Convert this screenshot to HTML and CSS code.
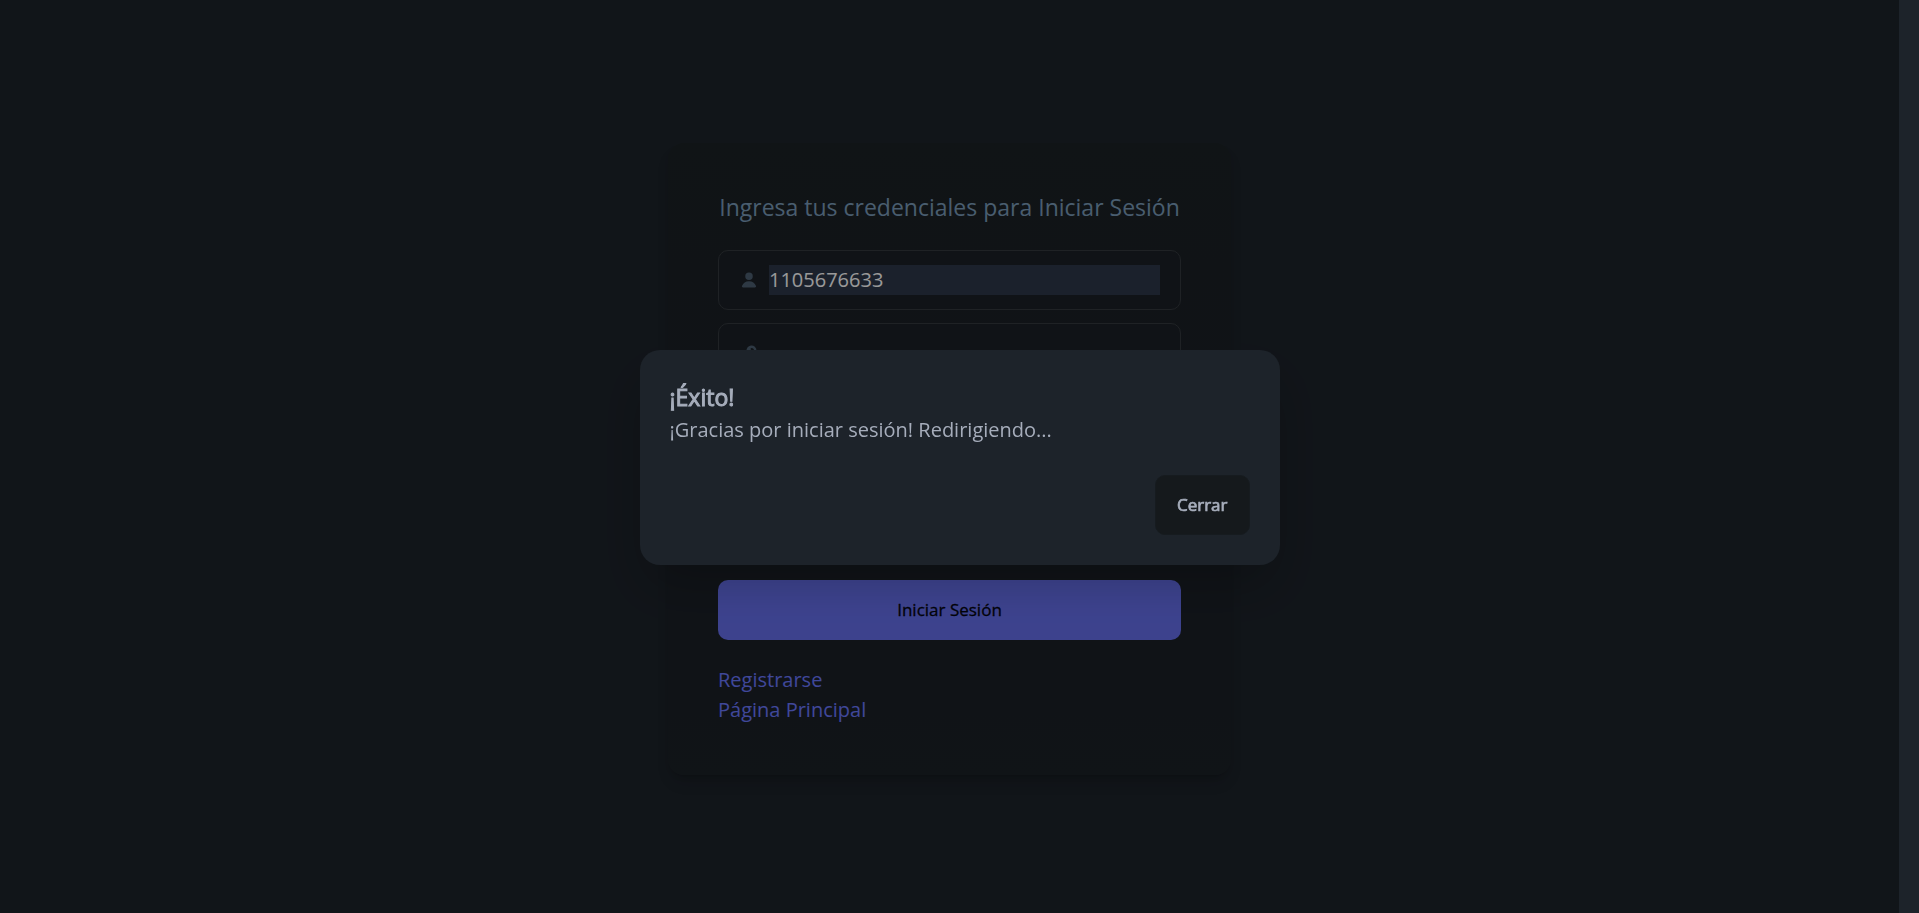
FILE: index.html
```html
<!DOCTYPE html>
<html lang="es">
<head>
<meta charset="utf-8">
<meta name="viewport" content="width=device-width, initial-scale=1">
<title>Iniciar Sesión</title>
<link rel="stylesheet" href="styles.css">
</head>
<body>
<main class="page">
  <form class="card">
    <h1 class="card-title">Ingresa tus credenciales para Iniciar Sesión</h1>
    <div class="fields">
      <label class="field">
        <svg class="field-icon" viewBox="0 0 16 16" fill="currentColor" aria-hidden="true"><path d="M8 8a3 3 0 1 0 0-6 3 3 0 0 0 0 6ZM12.735 14c.618 0 1.093-.561.872-1.139a6.002 6.002 0 0 0-11.215 0c-.22.578.254 1.139.872 1.139h9.47Z"/></svg>
        <input class="field-input filled" type="text" aria-label="Usuario" value="1105676633">
      </label>
      <label class="field">
        <svg class="field-icon" viewBox="0 0 16 16" fill="currentColor" aria-hidden="true"><path fill-rule="evenodd" d="M14 6a4 4 0 0 1-4.899 3.899l-1.955 1.955a.5.5 0 0 1-.353.146H5v1.5a.5.5 0 0 1-.5.5h-2a.5.5 0 0 1-.5-.5v-2.293a.5.5 0 0 1 .146-.353l3.955-3.955A4 4 0 1 1 14 6Zm-4-2a.75.75 0 0 0 0 1.5.5.5 0 0 1 .5.5.75.75 0 0 0 1.5 0 2 2 0 0 0-2-2Z" clip-rule="evenodd"/></svg>
        <input class="field-input" type="password" aria-label="Contraseña">
      </label>
    </div>
    <button class="submit" type="button">Iniciar Sesión</button>
    <nav class="links">
      <a href="#">Registrarse</a>
      <a href="#">Página Principal</a>
    </nav>
  </form>
</main>
<div class="backdrop"></div>
<div class="modal">
  <section class="modal-box" role="dialog" aria-labelledby="modal-title">
    <h2 class="modal-title" id="modal-title">¡Éxito!</h2>
    <p class="modal-text">¡Gracias por iniciar sesión! Redirigiendo...</p>
    <div class="modal-action">
      <button class="close" type="button">Cerrar</button>
    </div>
  </section>
</div>
</body>
</html>
```
FILE: styles.css
```css
* {
  box-sizing: border-box;
  margin: 0;
}

html {
  background: #1d232a;
}

body {
  padding-right: 20px;
  font: 20px/30px "Open Sans", "Noto Sans", sans-serif;
  color: #a6adbb;
}

.page {
  display: flex;
  align-items: center;
  justify-content: center;
  min-height: 100vh;
  padding-top: 4px;
}

.card {
  width: 563px;
  max-width: 100%;
  padding: 49px 50px 50px;
  border-radius: 16px;
  background: linear-gradient(#1c2225, #1b2027 40%, #1b2027 80%, #1c2227);
  box-shadow: 0 10px 15px -3px rgba(0, 0, 0, .12), 0 4px 6px -4px rgba(0, 0, 0, .25);
}

.card-title {
  margin-bottom: 28px;
  font-size: 23px;
  font-weight: 400;
  line-height: 30px;
  text-align: center;
  color: #7b9cba;
}

.fields {
  display: grid;
  gap: 13px;
  margin-bottom: 197px;
}

.field {
  display: flex;
  align-items: center;
  gap: 10px;
  height: 60px;
  padding: 0 20px;
  border: 1px solid #34393e;
  border-radius: 10px;
  background: #1c2127;
}

.field-icon {
  flex: none;
  width: 20px;
  height: 20px;
  color: #4d6072;
}

.field-input {
  flex: 1;
  min-width: 0;
  height: 30px;
  padding: 0;
  border: 0;
  outline: 0;
  background: transparent;
  font: inherit;
  color: #fff;
}

.filled {
  background: #2e384a;
}

.submit {
  display: block;
  width: 100%;
  height: 60px;
  border: 0;
  border-radius: 10px;
  background: #666fec;
  font: inherit;
  font-size: 17px;
  color: #03040e;
  -webkit-text-stroke: 0.3px currentColor;
}

.links {
  display: grid;
  justify-items: start;
  margin-top: 25px;
}

.links a {
  color: #6b78ff;
  text-decoration: none;
}

.backdrop {
  position: fixed;
  inset: 0 20px 0 0;
  background: rgba(0, 0, 0, .4);
}

.modal {
  position: fixed;
  inset: 0;
  display: grid;
  place-items: center;
  padding-top: 2px;
}

.modal-box {
  width: 640px;
  max-width: 100%;
  padding: 30px;
  border-radius: 20px;
  background: #1d232a;
  box-shadow: 0 25px 50px -12px rgba(0, 0, 0, .25);
}

.modal-title {
  font-size: 23px;
  font-weight: 400;
  line-height: 35px;
  -webkit-text-stroke: 1px currentColor;
}

.modal-action {
  display: flex;
  justify-content: flex-end;
  margin-top: 30px;
}

.close {
  height: 60px;
  padding: 0 21px;
  border: 1px solid #161b1f;
  border-radius: 10px;
  background: #15191c;
  font: inherit;
  font-size: 17px;
  color: #a6adbb;
  -webkit-text-stroke: 0.7px currentColor;
}
```
